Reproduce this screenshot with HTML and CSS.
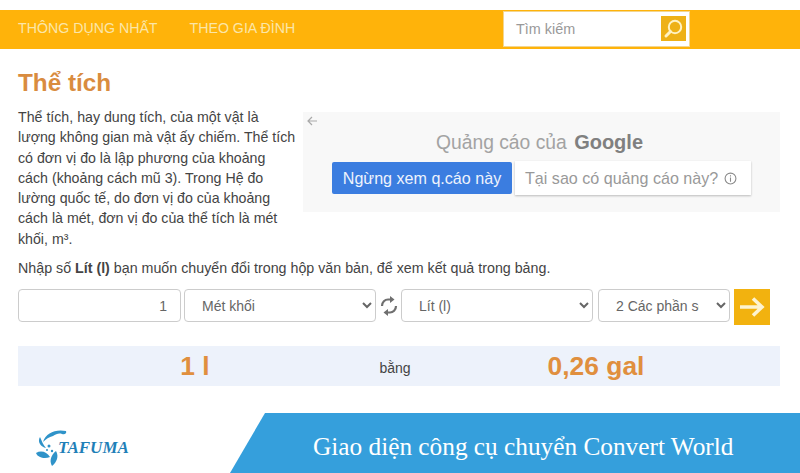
FILE: index.html
```html
<!DOCTYPE html>
<html lang="vi">
  <head>
    <meta charset="UTF-8" />
    <title>Thể tích</title>
    <link rel="stylesheet" href="styles.css">
  </head>
  <body>
    <div class="nav">
      <a class="nav-link">THÔNG DỤNG NHẤT</a>
      <a class="nav-link">THEO GIA ĐÌNH</a>
      <div class="search">
        <span class="search-text">Tìm kiếm</span>
        <div class="search-btn">
          <svg width="21" height="21" viewBox="0 0 21 21" fill="none" stroke="#fff3c4">
            <circle cx="12" cy="9" r="6.2" stroke-width="2" />
            <path d="M7.5 13.5L3 18" stroke-width="3" stroke-linecap="round" />
          </svg>
        </div>
      </div>
    </div>

    <div class="content">
      <h1>Thể tích</h1>
      <div class="intro">
        <p class="desc">Thể tích, hay dung tích, của một vật là lượng không gian mà vật ấy chiếm. Thể tích có đơn vị đo là lập phương của khoảng cách (khoảng cách mũ 3). Trong Hệ đo lường quốc tế, do đơn vị đo của khoảng cách là mét, đơn vị đo của thể tích là mét khối, m³.</p>
        <div class="ad">
          <svg class="ad-back" width="12" height="12" viewBox="0 0 12 12" fill="none" stroke="#a9a9a9" stroke-width="1.2">
            <path d="M11 6H2M6 2L2 6l4 4" />
          </svg>
          <div class="ad-title">Quảng cáo của <b>Google</b></div>
          <div class="ad-btns">
            <div class="ad-stop">Ngừng xem q.cáo này</div>
            <div class="ad-why">
              Tại sao có quảng cáo này?
              <svg width="13" height="13" viewBox="0 0 12 12" fill="none" stroke="#8a8a8a">
                <circle cx="6" cy="6" r="5" />
                <path d="M6 5v4M6 3v1.2" />
              </svg>
            </div>
          </div>
        </div>
      </div>
      <p class="hint">Nhập số <b>Lít (l)</b> bạn muốn chuyển đổi trong hộp văn bản, để xem kết quả trong bảng.</p>
      <div class="convert">
        <input class="field num" type="text" value="1" />
        <select class="field unit-from"><option>Mét khối</option></select>
        <svg class="swap" width="18" height="22" viewBox="0 0 18 22" fill="none" stroke="#6f6f6f" stroke-width="2.2">
          <path d="M2 11c0-4 3-6.500 6-6.500h3" />
          <path d="M10 1l4.500 3.500L10 8z" fill="#6f6f6f" stroke="none" />
          <path d="M16 11c0 4-3 6.500-6 6.500H7" />
          <path d="M8 14l-4.500 3.500L8 21z" fill="#6f6f6f" stroke="none" />
        </svg>
        <select class="field unit-to"><option>Lít (l)</option></select>
        <select class="field digits"><option>2 Các phần số thập phân</option></select>
        <div class="go">
          <svg width="28" height="22" viewBox="0 0 28 22" fill="none" stroke="#fdf3d0" stroke-width="3.600">
            <path d="M2 11h22M15 2.500L24 11l-9 8.500" />
          </svg>
        </div>
      </div>
      <div class="result">
        <span class="res-val">1 l</span>
        <span class="res-eq">bằng</span>
        <span class="res-val">0,26 gal</span>
      </div>
    </div>

    <div class="footer">
      <div class="logo">
        <svg width="34" height="38" viewBox="0 0 34 38" fill="#2f93c9">
          <path d="M7 13C10 4 19 0 30 2c1 2-1 4-4 3-3-1-6 0-9 2-4 1-7 3-10 6z" />
          <path d="M4 8c2 4 3 8 6 11C5 18 1 13 4 8z" />
          <path d="M0 24c5-3 11-1 14 4-5 2-12 1-14-4z" />
          <path d="M20 22c3 5 1 11-4 15-3-5-1-11 4-15z" />
          <circle cx="13" cy="17" r="1.500" />
          <circle cx="16" cy="22" r="1.200" />
          <circle cx="11" cy="21" r="1" />
        </svg>
        <span class="logo-text">TAFUMA</span>
      </div>
      <div class="banner">Giao diện công cụ chuyển Convert World</div>
    </div>
  </body>
</html>
```

FILE: styles.css
```css
html,
body {
  margin: 0;
  height: 473px;
  overflow: hidden;
}
body {
  background: #fff;
  font-family: "Liberation Sans", Arial, sans-serif;
  color: #444;
  display: flex;
  flex-direction: column;
}

/* top bar */
.nav {
  margin-top: 10px;
  height: 39px;
  background: #ffb30a;
  display: flex;
  align-items: center;
  padding: 0 110px 0 18px;
  gap: 32px;
}
.nav-link {
  color: #fbe6a8;
  font-size: 14.200px;
  padding-bottom: 3px;
}
.search {
  width: 187px;
  height: 36px;
  margin: 0 0 2px auto;
  background: #fff;
  border: 1px solid #f3d690;
  box-sizing: border-box;
  display: flex;
  align-items: center;
  justify-content: space-between;
  padding: 0 3px 0 12px;
}
.search-text {
  color: #999;
  font-size: 14.400px;
}
.search-btn {
  width: 25px;
  height: 25px;
  background: #eeb117;
  display: flex;
  align-items: center;
  justify-content: center;
}

/* page */
.content {
  flex: 1;
  padding: 0 20px 0 18px;
}
h1 {
  margin: 20px 0 0;
  height: 27px;
  line-height: 27px;
  font-size: 24.300px;
  color: #d98c3f;
}
.intro {
  display: flex;
  justify-content: space-between;
  margin-top: 11px;
}
.desc {
  width: 279px;
  margin: 0;
  font-size: 14.200px;
  line-height: 20.300px;
}
.ad {
  position: relative;
  width: 477px;
  height: 100px;
  margin-top: 5px;
  background: #f8f8f8;
  display: flex;
  flex-direction: column;
  align-items: center;
}
.ad-back {
  position: absolute;
  left: 3px;
  top: 3px;
}
.ad-title {
  margin: 19px 4px 0 0;
  font-size: 19.300px;
  line-height: 22px;
  color: #a3a3a3;
}
.ad-title b {
  margin-left: 2px;
  font-size: 20px;
  color: #808080;
}
.ad-btns {
  display: flex;
  align-items: center;
  gap: 3px;
  margin-top: 7px;
}
.ad-stop {
  width: 180px;
  height: 32px;
  line-height: 32px;
  text-align: center;
  background: #3b7de0;
  color: #eef3fc;
  font-size: 16.100px;
  border-radius: 2px;
}
.ad-why {
  width: 236px;
  height: 34px;
  box-sizing: border-box;
  padding-left: 10px;
  display: flex;
  align-items: center;
  gap: 6px;
  background: #fff;
  color: #999;
  font-size: 16.100px;
  white-space: nowrap;
  box-shadow: 0 1px 2px #bbb;
}
.hint {
  margin: 10px 0 0;
  font-size: 14.250px;
  line-height: 18px;
}
.convert {
  display: flex;
  align-items: flex-start;
  margin-top: 12px;
}
.field {
  height: 33px;
  box-sizing: border-box;
  border: 1px solid #ccc;
  border-radius: 4px;
  background: #fff;
  color: #666;
  font-family: inherit;
  font-size: 14px;
}
.num {
  width: 163px;
  text-align: right;
  padding-right: 13px;
}
.unit-from {
  width: 192px;
  margin-left: 3px;
  padding-left: 13px;
}
.swap {
  margin: 6px 3px 0 4px;
}
.unit-to {
  width: 192px;
  padding-left: 13px;
}
.digits {
  width: 132px;
  margin-left: 5px;
  padding: 0 14px 0 13px;
}
.go {
  width: 36px;
  height: 36px;
  margin-left: 4px;
  background: #f2b20f;
  display: flex;
  align-items: center;
  justify-content: center;
}
.result {
  height: 40px;
  margin-top: 21px;
  background: #edf2fb;
  display: grid;
  grid-template-columns: 354px 46px 1fr;
  align-items: center;
  text-align: center;
}
.res-val {
  font-size: 26.400px;
  font-weight: bold;
  color: #e08f3e;
}
.result .res-val:last-child {
  padding-right: 6px;
}
.res-eq {
  font-size: 14px;
  padding-top: 3px;
}

/* footer strip */
.footer {
  height: 60px;
  display: flex;
  justify-content: space-between;
  align-items: center;
}
.logo {
  display: flex;
  align-items: center;
  margin: 10px 0 0 36px;
}
.logo-text {
  margin-left: -12px;
  font-family: "Liberation Serif", serif;
  font-weight: bold;
  font-style: italic;
  font-size: 17px;
  color: #1f7fb8;
}
.banner {
  width: 570px;
  height: 60px;
  line-height: 66px;
  box-sizing: border-box;
  padding-left: 83px;
  background: #359fdc;
  clip-path: polygon(35px 0, 100% 0, 100% 100%, 0 100%);
  color: #fff;
  font-family: "Liberation Serif", serif;
  font-size: 25.300px;
  white-space: nowrap;
}
```
